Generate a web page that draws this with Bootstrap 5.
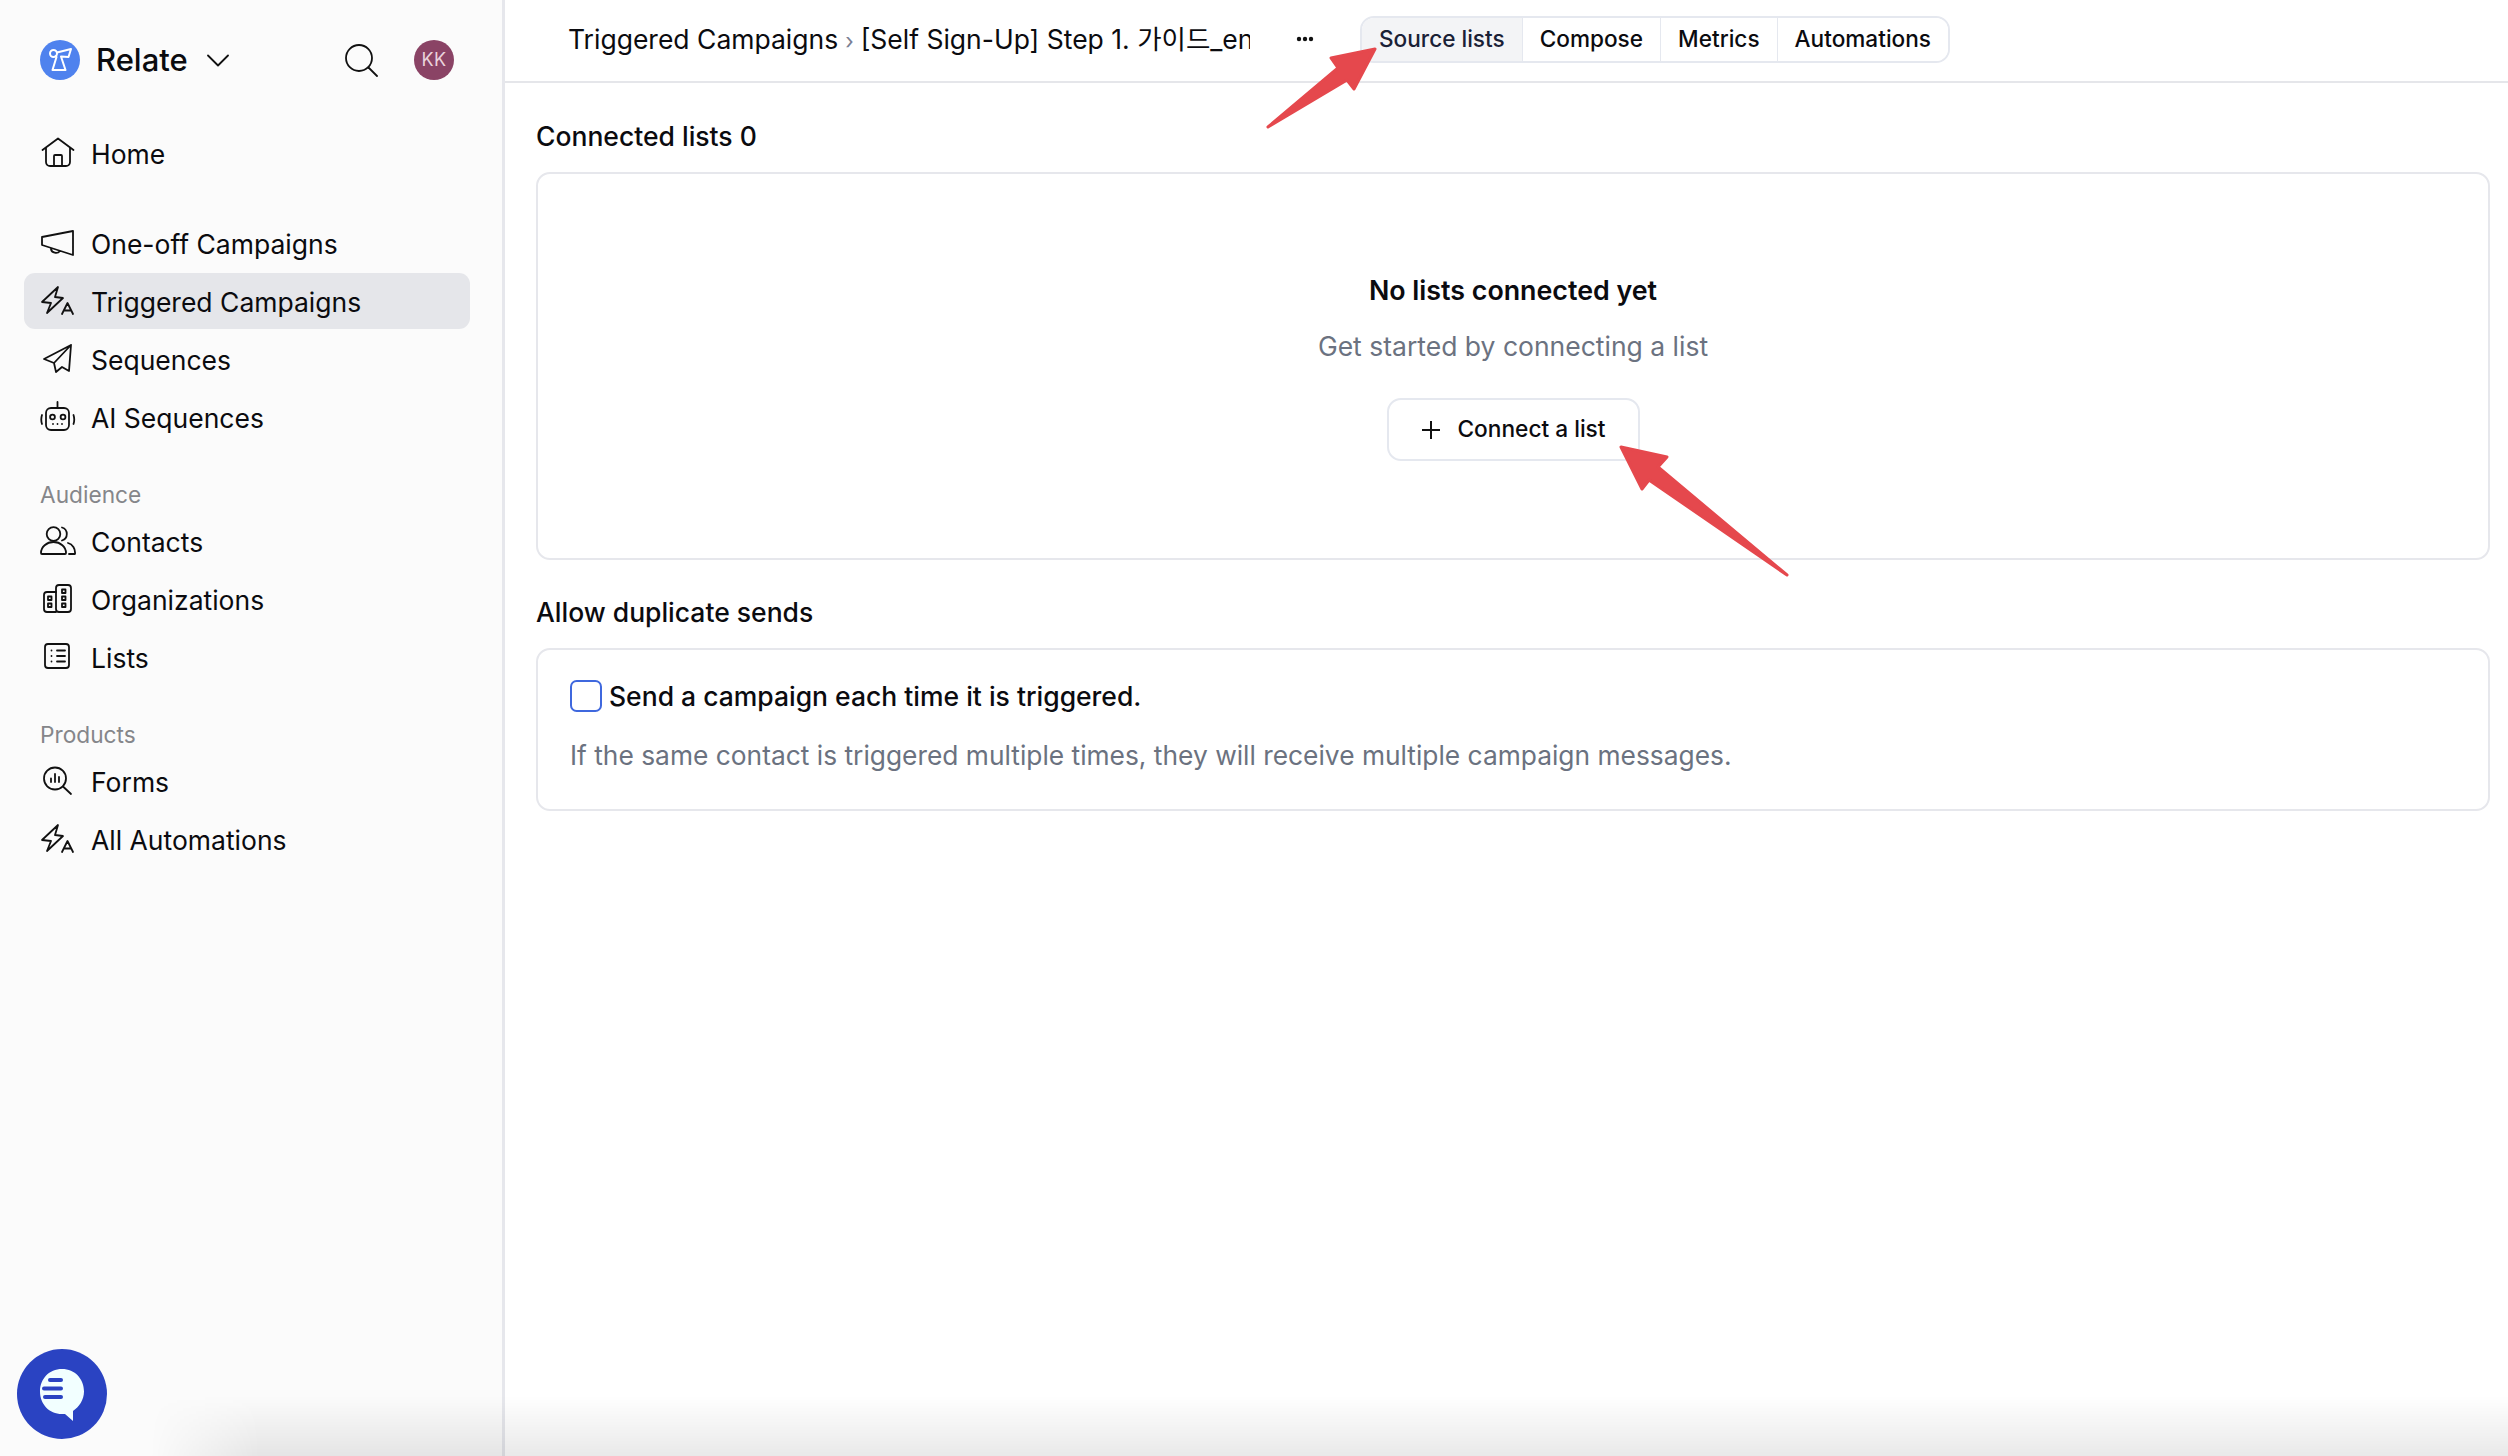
<!DOCTYPE html>
<html lang="en">
<head>
<meta charset="utf-8">
<title>Relate</title>
<link href="https://cdn.jsdelivr.net/npm/bootstrap@5.3.0/dist/css/bootstrap.min.css" rel="stylesheet">
<style>
html,body{height:100%;margin:0;overflow:hidden;}
body{font-family:Inter,"Noto Sans CJK KR",sans-serif;color:#0b0b0f;background:#fff;font-size:26.5px;line-height:1.3;}
.shell{height:1456px;}
.side{width:505px;flex:none;background:#fbfbfb;border-right:3px solid #e6e7ec;padding:40px 32px 0 24px;}
.brand-row{height:40px;padding-left:16px;margin-bottom:45px;}
.brand-name{font-size:31px;font-weight:500;margin-left:16px;}
.chev{margin-left:19px;}
.search-ico{margin-left:auto;margin-right:36px;}
.avatar-kk{width:40px;height:40px;border-radius:50%;background:#8a4365;color:#e9d3dc;font-size:18px;letter-spacing:.5px;margin-right:16px;}
.logo-dot{width:40px;height:40px;border-radius:50%;background:#4f82ee;}
.side-link{height:56px;padding:2px 0 0 16px;gap:15px;border-radius:11px;color:#0b0b0f;font-size:26.5px;margin-bottom:2px;}
.side-link.is-on{background:#e5e6ea;color:#0b0b0f;}
.side-link svg{flex:none;margin-top:-2px;}
.home-block{margin-bottom:32px;}
.side-label{height:36px;padding-left:16px;color:#85868a;font-size:22.7px;line-height:36px;}
.side-group{margin-bottom:30px;}
.ic{fill:none;stroke:#111;stroke-width:1.8;stroke-linecap:round;stroke-linejoin:round;}
.topbar{height:83px;border-bottom:2px solid #e5e6ea;padding-left:63px;padding-bottom:3px;}
.crumb{width:682px;overflow:hidden;white-space:nowrap;font-size:26.5px;}
.crumb-sep{color:#7a8094;font-size:22px;margin:0 7px;}
.more-ico{margin:0 46px 0 46px;flex:none;}
.tabs-box{height:47px;border:2px solid #e5e8ef;border-radius:14px;overflow:hidden;}
.tab-btn{border:0;border-right:2px solid #e5e8ef;border-radius:0!important;background:#fff;color:#0b0b0f;font-size:22.6px;padding:0 17px;font-weight:450;line-height:1;height:100%;}
.tab-btn:last-child{border-right:0;}
.tab-btn.is-on{background:#f3f4f6;color:#1a2136;}
.page{padding:0 18px 0 31px;}
.sec-title{font-size:26.5px;font-weight:500;height:36px;line-height:36px;}
.sec-one{margin-top:35px;margin-bottom:18px;}
.panel{border:2px solid #e6e7ec;border-radius:14px;background:#fff;}
.panel-empty{height:388px;padding-top:98px;}
.empty-h{font-size:26.8px;font-weight:600;height:36px;line-height:36px;}
.empty-s{font-size:26.5px;color:#6b7280;height:36px;line-height:36px;margin-top:20px;}
.add-btn{width:253px;height:63px;margin-top:34px;border:2px solid #e5e8ef;border-radius:14px;background:#fff;color:#0b0b0f;font-size:22.7px;font-weight:500;padding:0 0 0 1px;gap:16px;}
.sec-two{margin-top:34px;margin-bottom:18px;}
.panel-opt{height:163px;padding:29px 32px 0 32px;}
.opt-check{width:32px;height:32px;margin:0 7px 0 0;border:2px solid #3f68de;border-radius:4px;flex:none;}
.opt-label{font-size:26.5px;font-weight:500;}
.opt-help{font-size:26.35px;color:#6b7280;margin-top:25px;}
.arrow-layer{position:absolute;left:0;top:0;width:2508px;height:1456px;pointer-events:none;z-index:5;}
.chat-fab{position:absolute;left:17px;top:1349px;width:90px;height:90px;z-index:7;}
.fade-bottom{position:absolute;left:150px;right:0;bottom:0;height:60px;z-index:4;pointer-events:none;background:linear-gradient(to top,rgba(0,0,0,.085),rgba(0,0,0,0));-webkit-mask-image:linear-gradient(to right,transparent,#000 110px);mask-image:linear-gradient(to right,transparent,#000 110px);}
</style>
</head>
<body>
<div class="shell d-flex position-relative">
  <aside class="side d-flex flex-column">
    <div class="brand-row d-flex align-items-center">
      <span class="logo-dot d-flex align-items-center justify-content-center flex-none">
        <svg width="40" height="40" viewBox="0 0 40 40"><g fill="none" stroke="#fff" stroke-width="2" stroke-linejoin="round"><circle cx="13.500" cy="13.500" r="3.500"/><path d="M17 12.500 L31 9 L28.500 17 L21 16.500 L25.500 30 H12.500 L16.500 17 L15 15.500"/></g></svg>
      </span>
      <span class="brand-name">Relate</span>
      <svg class="chev" width="22" height="13" viewBox="0 0 22 13"><path class="ic" d="M1 1.500 L11 11.500 L21 1.500"/></svg>
      <svg class="search-ico" width="34" height="34" viewBox="0 0 34 34"><circle class="ic" cx="15" cy="15" r="13"/><path class="ic" d="M24.500 24.500 L33 33"/></svg>
      <span class="avatar-kk d-flex align-items-center justify-content-center">KK</span>
    </div>

    <nav class="nav flex-column home-block">
      <a class="nav-link side-link d-flex align-items-center" href="#">
        <svg width="36" height="36" viewBox="0 0 36 36"><path class="ic" d="M2.500 15 L18 3.500 L33.500 15 M6 13 V27 a4 4 0 0 0 4 4 H26 a4 4 0 0 0 4-4 V13 M14 31 V21 a1 1 0 0 1 1-1 h6 a1 1 0 0 1 1 1 V31"/></svg>
        Home</a>
    </nav>

    <nav class="nav flex-column side-group">
      <a class="nav-link side-link d-flex align-items-center" href="#">
        <svg width="36" height="36" viewBox="0 0 36 36"><path class="ic" d="M2 12 L33 6 V30 L2 20 Z M11 24 a5 4.500 0 0 0 9 2"/></svg>
        One-off Campaigns</a>
      <a class="nav-link side-link is-on d-flex align-items-center" href="#">
        <svg width="36" height="36" viewBox="0 0 36 36"><path class="ic" d="M18 4 L2 19 L11 20 L7 30 L23 15 L15 14 Z M22 31 L27.500 20 L33 31 M24 27.500 H31"/></svg>
        Triggered Campaigns</a>
      <a class="nav-link side-link d-flex align-items-center" href="#">
        <svg width="36" height="36" viewBox="0 0 36 36"><path class="ic" d="M31 4 L4 18 L14 22 L16 31 L22 26 L29 30 Z M31 4 L14 22"/></svg>
        Sequences</a>
      <a class="nav-link side-link d-flex align-items-center" href="#">
        <svg width="36" height="36" viewBox="0 0 36 36"><rect class="ic" x="6" y="9" width="23" height="22" rx="5"/><path class="ic" d="M17.500 3 V9 M2 16 q-1.500 4.500 0 9 M33.500 16 q1.500 4.500 0 9 M13 25 h.01 M17.500 25 h.01 M22 25 h.01"/><circle class="ic" cx="12.500" cy="18" r="2.400"/><circle class="ic" cx="23" cy="18" r="2.400"/></svg>
        AI Sequences</a>
    </nav>

    <div class="side-label">Audience</div>
    <nav class="nav flex-column side-group">
      <a class="nav-link side-link d-flex align-items-center" href="#">
        <svg width="36" height="36" viewBox="0 0 36 36"><circle class="ic" cx="13.500" cy="11" r="6.800"/><path class="ic" d="M22 4.500 a6.800 6.800 0 0 1 0 13 M2 31 a1 1 0 0 1-1-1 a12.500 11 0 0 1 25 0 a1 1 0 0 1-1 1 Z M28 20 a9 10 0 0 1 7 11 H29"/></svg>
        Contacts</a>
      <a class="nav-link side-link d-flex align-items-center" href="#">
        <svg width="36" height="36" viewBox="0 0 36 36"><rect class="ic" x="16" y="4" width="15" height="27" rx="3"/><path class="ic" d="M16 11 H7 a3 3 0 0 0-3 3 V28 a3 3 0 0 0 3 3 H16"/><rect class="ic" x="22" y="8.500" width="3.500" height="3.500"/><rect class="ic" x="22" y="15.500" width="3.500" height="3.500"/><rect class="ic" x="22" y="22.500" width="3.500" height="3.500"/><rect class="ic" x="8" y="15.500" width="3.500" height="3.500"/><rect class="ic" x="8" y="22.500" width="3.500" height="3.500"/></svg>
        Organizations</a>
      <a class="nav-link side-link d-flex align-items-center" href="#">
        <svg width="36" height="36" viewBox="0 0 36 36"><rect class="ic" x="5" y="5" width="24" height="24" rx="3"/><path class="ic" d="M11.500 11.500 h.01 M11.500 17 h.01 M11.500 22.500 h.01 M17 11.500 H25 M17 17 H25 M17 22.500 H25"/></svg>
        Lists</a>
    </nav>

    <div class="side-label">Products</div>
    <nav class="nav flex-column">
      <a class="nav-link side-link d-flex align-items-center" href="#">
        <svg width="36" height="36" viewBox="0 0 36 36"><circle class="ic" cx="15" cy="15.500" r="11"/><path class="ic" d="M23 23.500 L31 31 M11 15.500 V19 M15 11 V19 M19 14 V19"/></svg>
        Forms</a>
      <a class="nav-link side-link d-flex align-items-center" href="#">
        <svg width="36" height="36" viewBox="0 0 36 36"><path class="ic" d="M18 4 L2 19 L11 20 L7 30 L23 15 L15 14 Z M22 31 L27.500 20 L33 31 M24 27.500 H31"/></svg>
        All Automations</a>
    </nav>
  </aside>

  <main class="flex-grow-1 d-flex flex-column">
    <header class="topbar d-flex align-items-center">
      <div class="crumb">Triggered Campaigns<span class="crumb-sep">›</span>[Self Sign-Up] Step 1. 가이드_en</div>
      <svg class="more-ico" width="18" height="6" viewBox="0 0 18 6"><circle cx="3" cy="3" r="2.200" fill="#111"/><circle cx="9" cy="3" r="2.200" fill="#111"/><circle cx="15" cy="3" r="2.200" fill="#111"/></svg>
      <div class="tabs-box btn-group" role="group">
        <button type="button" class="btn tab-btn is-on">Source lists</button>
        <button type="button" class="btn tab-btn">Compose</button>
        <button type="button" class="btn tab-btn">Metrics</button>
        <button type="button" class="btn tab-btn">Automations</button>
      </div>
    </header>

    <div class="page">
      <div class="sec-title sec-one">Connected lists 0</div>
      <section class="panel panel-empty d-flex flex-column align-items-center">
        <div class="empty-h">No lists connected yet</div>
        <div class="empty-s">Get started by connecting a list</div>
        <button type="button" class="btn add-btn d-flex align-items-center justify-content-center">
          <svg width="20" height="20" viewBox="0 0 20 20"><path d="M10 1 V19 M1 10 H19" stroke="#111" stroke-width="2" fill="none"/></svg>
          Connect a list
        </button>
      </section>

      <div class="sec-title sec-two">Allow duplicate sends</div>
      <section class="panel panel-opt">
        <div class="d-flex align-items-center">
          <input class="form-check-input opt-check" type="checkbox" id="dup">
          <label class="opt-label" for="dup">Send a campaign each time it is triggered.</label>
        </div>
        <div class="opt-help">If the same contact is triggered multiple times, they will receive multiple campaign messages.</div>
      </section>
    </div>
  </main>

  <div class="fade-bottom"></div>

  <svg class="arrow-layer" viewBox="0 0 2508 1456">
    <g fill="#e5484d" stroke="#e5484d" stroke-width="3" stroke-linejoin="round">
      <path d="M1375 49 L1331 58 L1338 68 L1268 127 L1347 80 L1354 89 Z"/>
      <path d="M1621 447 L1667 457 L1658 467 L1787 575 L1649 480 L1642 489 Z"/>
    </g>
  </svg>

  <svg class="chat-fab" viewBox="0 0 90 90">
    <circle cx="45" cy="45" r="45" fill="#2a43c2"/>
    <path d="M45 20 C32 20 23 30 23 42.500 C23 55 32 65 45 65 L48 65 L56 72 L56 62 C62 58 67 51 67 42.500 C67 30 58 20 45 20 Z" fill="#f2ffff"/>
    <g stroke="#2a43c2" stroke-width="4" stroke-linecap="round"><path d="M33 31 H44"/><path d="M27 39.500 H44"/><path d="M28 48 H44"/></g>
  </svg>
</div>
<script src="https://cdn.jsdelivr.net/npm/bootstrap@5.3.0/dist/js/bootstrap.bundle.min.js"></script>
</body>
</html>
